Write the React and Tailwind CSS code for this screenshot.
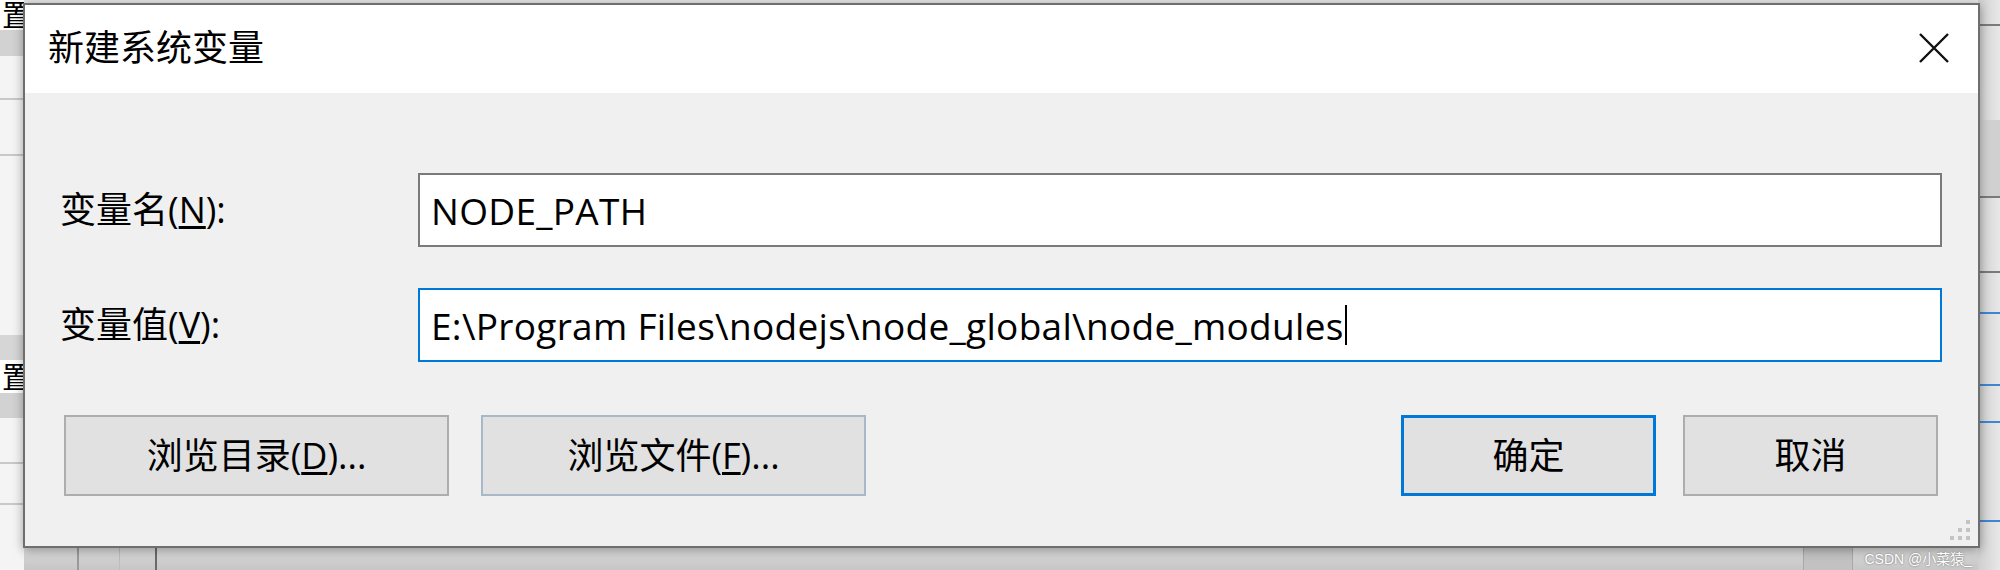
const FONT = "font-['Open_Sans','Noto_Sans_CJK_SC',sans-serif]"

function CloseIcon() {
  return (
    <svg width="32" height="32" viewBox="0 0 32 32" fill="none">
      <path d="M2 2 L30 30 M30 2 L2 30" stroke="#111" strokeWidth="2.4" />
    </svg>
  )
}

function Grip() {
  const dot = 'w-[4px] h-[4px] bg-[#c4c4c4]'
  return (
    <div className="absolute right-[8px] bottom-[6px] flex flex-col items-end gap-[4px]">
      <div className="flex gap-[4px]"><span className={dot} /></div>
      <div className="flex gap-[4px]"><span className={dot} /><span className={dot} /></div>
      <div className="flex gap-[4px]"><span className={dot} /><span className={dot} /><span className={dot} /></div>
    </div>
  )
}

function Field({ label, mnemonic, value, focused }) {
  return (
    <div className="flex items-center">
      <label className="w-[358px] text-[36px] leading-none text-black">
        {label}(<u className="underline-offset-[3px]">{mnemonic}</u>):
      </label>
      <div
        className={
          'flex-1 h-[74px] bg-white flex items-center pl-[11px] border-2 ' +
          (focused ? 'border-[#0078d7]' : 'border-[#7a7a7a]')
        }
      >
        <span className="text-[37px] leading-none text-black tracking-[0.3px] whitespace-nowrap">{value}</span>
        {focused && <span className="ml-[1px] w-[2px] h-[40px] bg-black" />}
      </div>
    </div>
  )
}

function Button({ children, className = '', variant }) {
  const border =
    variant === 'default'
      ? 'border-[3px] border-[#0078d7]'
      : variant === 'hover'
        ? 'border-2 border-[#a9b8c9]'
        : 'border-2 border-[#adadad]'
  return (
    <button
      type="button"
      className={`h-[81px] bg-[#e1e1e1] ${border} text-[36px] leading-none text-black flex items-center justify-center ${className}`}
    >
      {children}
    </button>
  )
}

function Backdrop() {
  return (
    <div className="absolute inset-0 flex">
      {/* left strip of the window behind */}
      <div className="w-[24px] flex flex-col bg-[#f4f4f4] overflow-hidden">
        <div className="h-[30px] bg-white flex items-center justify-end overflow-hidden">
          <span className="text-[30px] leading-none text-black mr-[-8px]">置</span>
        </div>
        <div className="h-[26px] bg-[#d2d2d2]" />
        <div className="h-[44px] border-b-2 border-[#c8c8c8]" />
        <div className="h-[56px] border-b-2 border-[#c8c8c8]" />
        <div className="h-[179px]" />
        <div className="h-[25px] bg-[#d6d6d6]" />
        <div className="h-[33px] bg-white flex items-center justify-end overflow-hidden">
          <span className="text-[30px] leading-none text-black mr-[-8px]">置</span>
        </div>
        <div className="h-[25px] bg-[#d2d2d2]" />
        <div className="h-[46px] border-b-2 border-[#c8c8c8]" />
        <div className="h-[41px] border-b-2 border-[#c8c8c8]" />
        <div className="flex-1" />
      </div>

      {/* middle: only the bottom strip shows */}
      <div className="flex-1 flex flex-col">
        <div className="flex-1 bg-[#e6e6e6]" />
        <div className="h-[24px] bg-gradient-to-b from-[#dcdcdc] to-[#c6c6c6] flex">
          <div className="w-[53px]" />
          <div className="w-[42px] border-l-2 border-[#9a9a9a]" />
          <div className="w-[36px] border-l border-[#bdbdbd]" />
          <div className="flex-1 border-l-2 border-[#6a6a6a]" />
          <div className="w-[50px] bg-[#c2c2c2] border-x border-[#a8a8a8]" />
          <div className="w-[125px]" />
        </div>
      </div>

      {/* right strip */}
      <div className="w-[22px] flex flex-col bg-gradient-to-r from-[#cfcfcf] to-[#e8e8e8]">
        <div className="h-[24px]" />
        <div className="h-[96px] border-t-2 border-[#7a7a7a]" />
        <div className="h-[76px] bg-[#d0d0d0]" />
        <div className="h-[75px] border-t-2 border-[#7a7a7a]" />
        <div className="h-[41px] border-t-2 border-[#7a7a7a]" />
        <div className="h-[72px] border-t-2 border-[#3f86d0]" />
        <div className="h-[37px] border-t-2 border-[#3f86d0]" />
        <div className="h-[99px] border-t-2 border-[#3f86d0]" />
        <div className="flex-1 border-t-2 border-[#3f86d0]" />
      </div>
    </div>
  )
}

export default function App() {
  return (
    <div className={`relative w-[2000px] h-[570px] overflow-hidden ${FONT}`}>
      <Backdrop />

      {/* dialog window */}
      <div className="absolute left-[23px] top-[3px] w-[1957px] h-[545px] border-2 border-[#6e6e6e] shadow-[0_2px_10px_rgba(0,0,0,0.35)] flex flex-col">
        <div className="h-[88px] bg-white flex items-center justify-between pl-[23px] pr-[28px] pb-[2px]">
          <span className="text-[36px] leading-none text-black">新建系统变量</span>
          <CloseIcon />
        </div>

        <div className="relative flex-1 bg-[#f0f0f0] flex flex-col pt-[80px] pl-[35px] pr-[36px]">
          <Field label="变量名" mnemonic="N" value="NODE_PATH" />
          <div className="h-[41px]" />
          <Field
            label="变量值"
            mnemonic="V"
            value="E:\Program Files\nodejs\node_global\node_modules"
            focused
          />

          <div className="mt-[53px] flex items-center pl-[4px] pr-[4px]">
            <Button className="w-[385px]">
              浏览目录(<u className="underline-offset-[3px]">D</u>)...
            </Button>
            <Button className="w-[385px] ml-[32px]" variant="hover">
              浏览文件(<u className="underline-offset-[3px]">F</u>)...
            </Button>
            <div className="flex-1" />
            <Button className="w-[255px]" variant="default">确定</Button>
            <Button className="w-[255px] ml-[27px]">取消</Button>
          </div>

          <Grip />
        </div>
      </div>

      {/* watermark */}
      <span className="absolute right-[28px] bottom-[4px] whitespace-nowrap text-[14px] leading-none text-white [text-shadow:0_0_2px_#666] font-['Liberation_Sans','Noto_Sans_CJK_SC',sans-serif]">
        CSDN @小菜猿_
      </span>
    </div>
  )
}
